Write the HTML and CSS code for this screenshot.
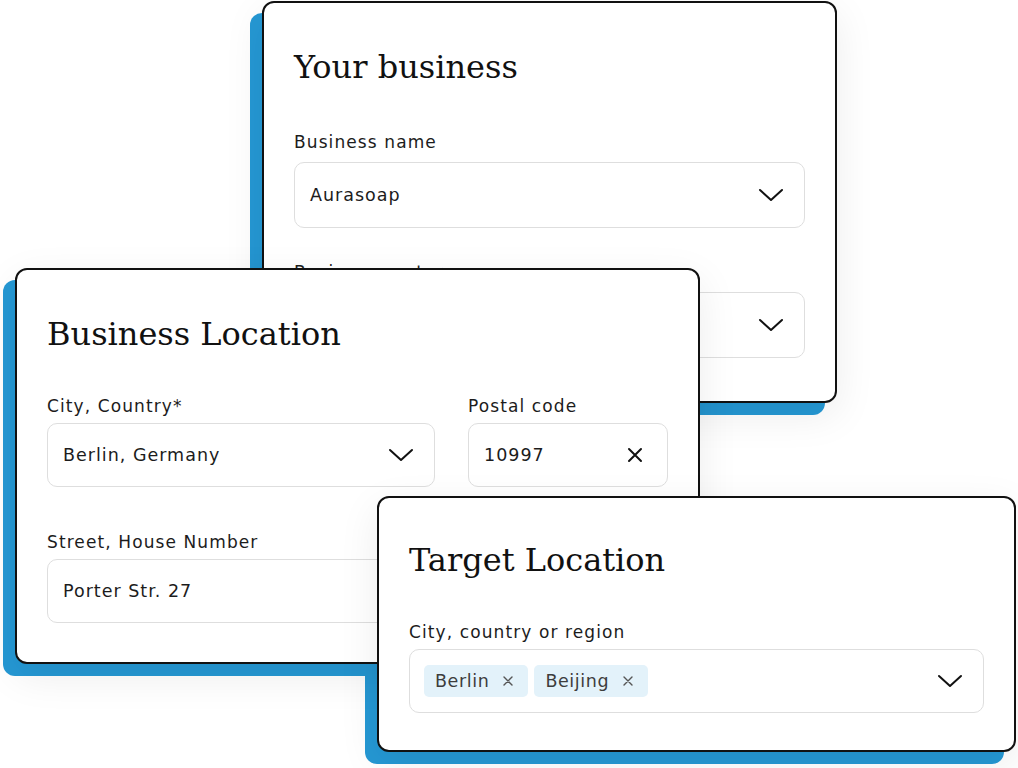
FILE: index.html
```html
<!DOCTYPE html>
<html lang="en">

<head>
  <meta charset="UTF-8" />
  <title>Business profile</title>
  <link rel="stylesheet" href="styles.css">
</head>

<body>

  <div class="stage">

    <!-- Your business -->
    <div class="card card-business">
      <h2 class="card-title">Your business</h2>

      <div class="field">
        <label class="field-label">Business name</label>
        <div class="input">
          <span class="input-value">Aurasoap</span>
          <svg class="chevron" width="26" height="14" viewBox="0 0 26 14">
            <path d="M2 2 L13 12 L24 2" fill="none" stroke="#111" stroke-width="2" stroke-linecap="round" stroke-linejoin="round" />
          </svg>
        </div>
      </div>

      <div class="field">
        <label class="field-label">Business sector</label>
        <div class="input">
          <span class="input-value"></span>
          <svg class="chevron" width="26" height="14" viewBox="0 0 26 14">
            <path d="M2 2 L13 12 L24 2" fill="none" stroke="#111" stroke-width="2" stroke-linecap="round" stroke-linejoin="round" />
          </svg>
        </div>
      </div>
    </div>

    <!-- Business Location -->
    <div class="card card-location">
      <h2 class="card-title">Business Location</h2>

      <div class="row">
        <div class="field">
          <label class="field-label">City, Country*</label>
          <div class="input">
            <span class="input-value">Berlin, Germany</span>
            <svg class="chevron" width="26" height="14" viewBox="0 0 26 14">
              <path d="M2 2 L13 12 L24 2" fill="none" stroke="#111" stroke-width="2" stroke-linecap="round" stroke-linejoin="round" />
            </svg>
          </div>
        </div>
        <div class="field">
          <label class="field-label">Postal code</label>
          <div class="input">
            <span class="input-value">10997</span>
            <svg class="clear" width="16" height="16" viewBox="0 0 16 16">
              <path d="M2 2 L14 14 M14 2 L2 14" fill="none" stroke="#111" stroke-width="2" stroke-linecap="round" />
            </svg>
          </div>
        </div>
      </div>

      <div class="field">
        <label class="field-label">Street, House Number</label>
        <div class="input">
          <span class="input-value">Porter Str. 27</span>
        </div>
      </div>
    </div>

    <!-- Target Location -->
    <div class="card card-target">
      <h2 class="card-title">Target Location</h2>

      <div class="field">
        <label class="field-label">City, country or region</label>
        <div class="input input-tags">
          <span class="tag">Berlin
            <svg width="10" height="10" viewBox="0 0 10 10">
              <path d="M1 1 L9 9 M9 1 L1 9" fill="none" stroke="#555" stroke-width="1.4" stroke-linecap="round" />
            </svg>
          </span>
          <span class="tag">Beijing
            <svg width="10" height="10" viewBox="0 0 10 10">
              <path d="M1 1 L9 9 M9 1 L1 9" fill="none" stroke="#555" stroke-width="1.4" stroke-linecap="round" />
            </svg>
          </span>
          <svg class="chevron" width="26" height="14" viewBox="0 0 26 14">
            <path d="M2 2 L13 12 L24 2" fill="none" stroke="#111" stroke-width="2" stroke-linecap="round" stroke-linejoin="round" />
          </svg>
        </div>
      </div>
    </div>

  </div>

</body>

</html>
```

FILE: styles.css
```css
body {
  margin: 0;
  background: #fff;
  font-family: "DejaVu Sans", "Open Sans", sans-serif;
  color: #1c1c1c;
}

.stage {
  position: relative;
  width: 1018px;
  height: 768px;
  overflow: hidden;
  isolation: isolate;
}

/* cards sit on a free canvas, overlapping like windows */
.card {
  position: absolute;
  box-sizing: border-box;
  background: #fff;
  border: 2px solid #111;
  border-radius: 12px;
  padding: 44px 30px 0;
  box-shadow: 0 12px 40px rgba(0, 0, 0, 0.08);
}

.card::before {
  content: "";
  position: absolute;
  top: 10px;
  right: 10px;
  bottom: -14px;
  left: -14px;
  background: #2598d4;
  border-radius: 12px;
  z-index: -1;
}

.card-business {
  left: 262px;
  top: 1px;
  width: 575px;
  height: 402px;
}

.card-location {
  left: 15px;
  top: 268px;
  width: 685px;
  height: 396px;
}

.card-target {
  left: 377px;
  top: 496px;
  width: 639px;
  height: 256px;
  padding-top: 42px;
}

.card-title {
  margin: 0 0 40px;
  font-family: "DejaVu Serif", serif;
  font-weight: normal;
  font-size: 32px;
  line-height: 40px;
  color: #111;
}

.field {
  margin-bottom: 43px;
}

.field-label {
  display: block;
  font-size: 17px;
  line-height: 24px;
  letter-spacing: 1.1px;
  margin-bottom: 5px;
  color: #1c1c1c;
}

.input {
  display: flex;
  align-items: center;
  height: 64px;
  box-sizing: border-box;
  border: 1.5px solid #dedede;
  border-radius: 10px;
  padding: 0 20px 0 15px;
}

/* the top card is a touch roomier */
.card-business .card-title {
  margin-bottom: 43px;
}

.card-business .field {
  margin-bottom: 32px;
}

.card-business .field-label {
  margin-bottom: 8px;
}

.card-business .input {
  height: 66px;
}

.input-value {
  flex: 1;
  font-size: 17.5px;
  letter-spacing: 1px;
  color: #1c1c1c;
}

.chevron {
  margin-left: auto;
}

.clear {
  margin-left: auto;
  margin-right: 4px;
}

.row {
  display: grid;
  grid-template-columns: 1fr 200px;
  gap: 33px;
}

.input-tags {
  gap: 6px;
  padding-left: 14px;
}

.tag {
  display: flex;
  align-items: center;
  gap: 14px;
  height: 32px;
  padding: 0 15px 0 11px;
  background: #e3f2fa;
  border-radius: 5px;
  font-size: 17.5px;
  letter-spacing: 0.6px;
  color: #3d3d3d;
}
```
